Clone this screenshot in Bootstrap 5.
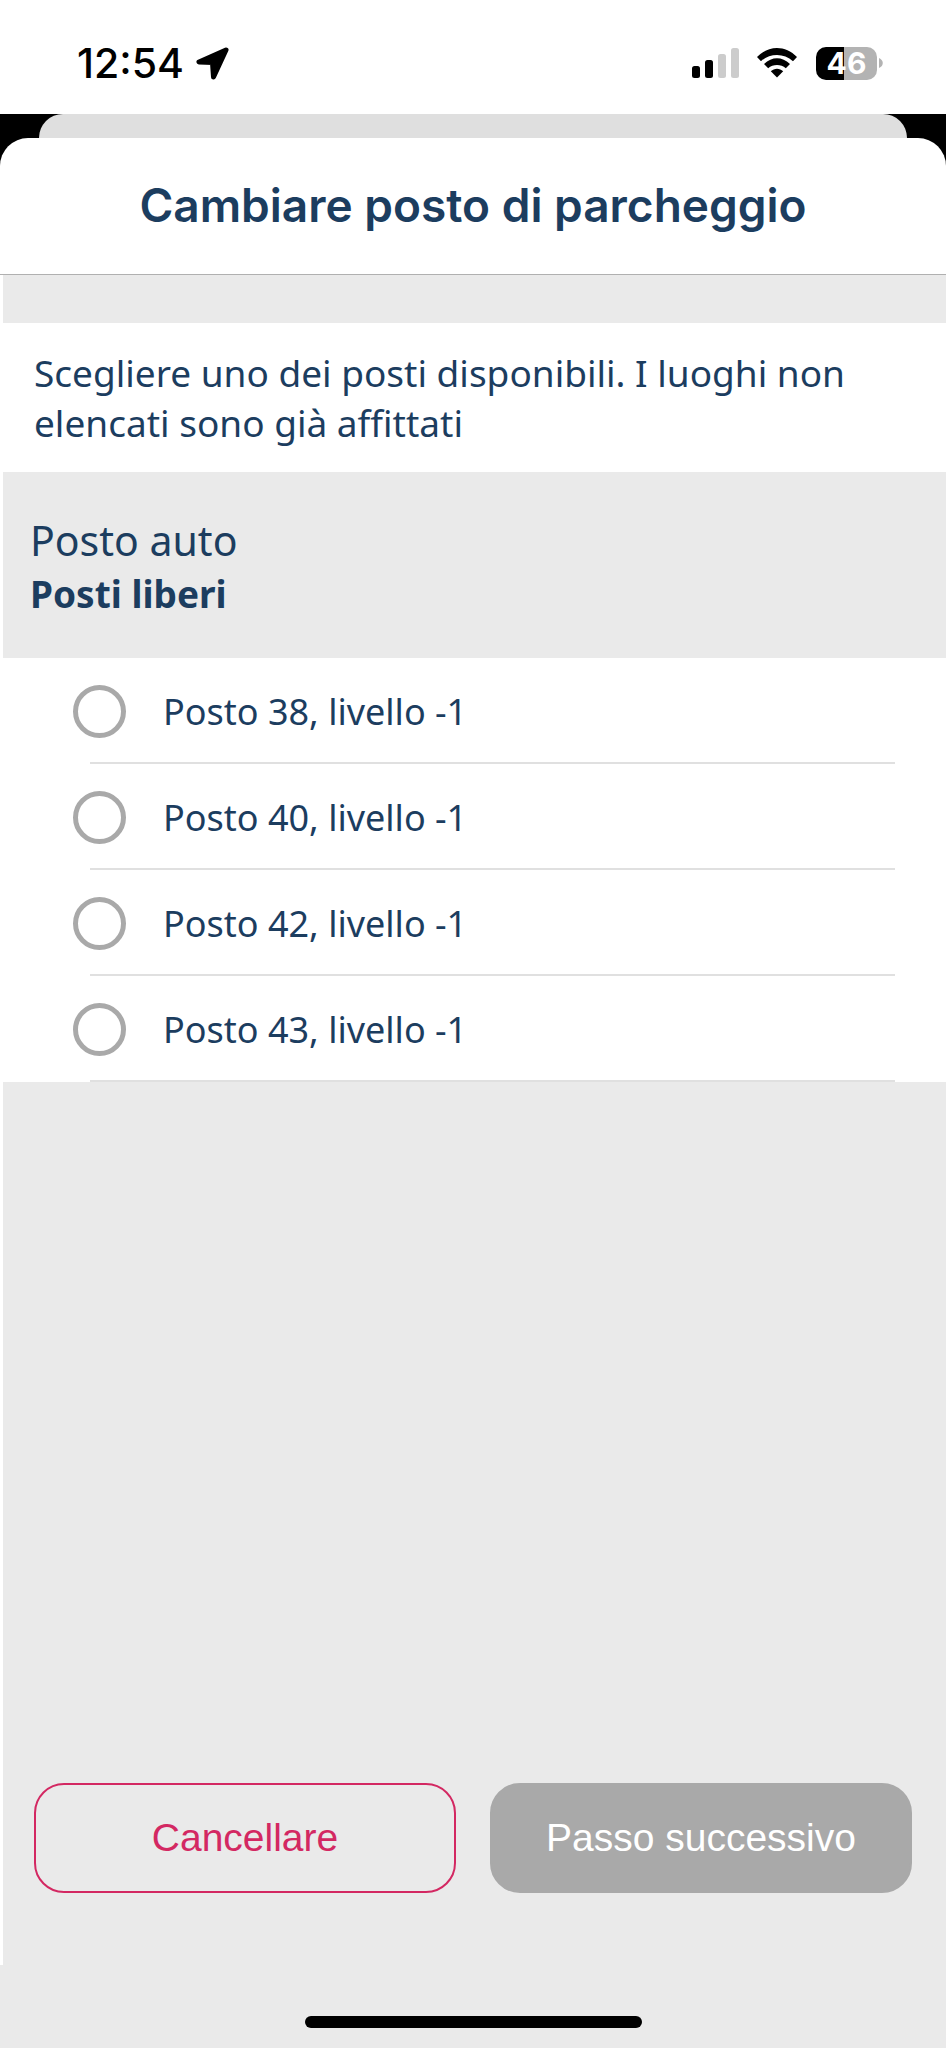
<!DOCTYPE html>
<html lang="it">
<head>
<meta charset="utf-8">
<meta name="viewport" content="width=device-width, initial-scale=1">
<title>Cambiare posto di parcheggio</title>
<link href="https://cdn.jsdelivr.net/npm/bootstrap@5.3.0/dist/css/bootstrap.min.css" rel="stylesheet">
<style>
  :root { --navy: #1c3d5f; --panel: #eaeaea; --accent: #d32862; --muted: #a9a9a9; }
  body { font-family: "Noto Sans", sans-serif; color: var(--navy); background: #000; }

  .status-bar { height: 114px; padding: 12px 63px 0 77px; color: #000; font-family: Inter, sans-serif; }
  .clock { font-size: 41px; line-height: 50px; font-weight: 500; }
  .battery-level {
    width: 61px; height: 33px; border-radius: 10px; color: #fff;
    font-size: 30px; line-height: 33px; font-weight: 700;
    background: linear-gradient(to right, #000 46%, #b3b3b3 46%);
  }

  .back-card { height: 24px; margin: 0 39px; background: #dfdfdf; border-radius: 26px 26px 0 0; }
  .sheet { border-radius: 28px 28px 0 0; background: #fff; }
  .sheet-header { height: 137px; padding-bottom: 2px; border-bottom: 1px solid #b0b0b0; }
  .sheet-title { font-family: Inter, sans-serif; font-size: 46px; line-height: 56px; font-weight: 600; }

  .sheet-body { background: var(--panel); border-left: 3px solid #fff; }
  .intro { margin-top: 48px; padding: 25px 31px 24px; font-size: 37px; line-height: 50px; }
  .group-head { padding: 40px 27px 38px; }
  .group-title { font-size: 41px; line-height: 56px; font-weight: 400; }
  .group-sub { font-size: 37px; line-height: 52px; font-weight: 700; }

  .spot { height: 104px; padding: 3px 51px 0 70px; gap: 37px; font-size: 36px; line-height: 50px; }
  .spot .form-check-input { width: 53px; height: 53px; margin: 0; border: 5px solid var(--muted); background-color: #fff; }
  .spot .form-check-input:checked { border-color: var(--accent); background-color: var(--accent); }
  .divider { height: 2px; margin: 0 51px 0 87px; background: #e0e0e0; }

  .actions { padding: 0 34px 72px 31px; gap: 34px; }
  .actions .btn {
    flex: 1 1 0; height: 110px; padding: 0; border-radius: 30px; border-width: 2px;
    font-family: "Liberation Sans", sans-serif; font-size: 39px; line-height: 50px;
  }
  .btn-cancel { --bs-btn-color: var(--accent); --bs-btn-border-color: var(--accent); --bs-btn-hover-color: #fff; --bs-btn-hover-bg: var(--accent); }
  .btn-next { --bs-btn-disabled-color: #fff; --bs-btn-disabled-bg: var(--muted); --bs-btn-disabled-border-color: var(--muted); --bs-btn-disabled-opacity: 1; }

  .home-area { height: 83px; padding-bottom: 20px; background: var(--panel); }
  .home-indicator { width: 337px; height: 12px; border-radius: 6px; background: #000; }
</style>
</head>
<body class="d-flex flex-column min-vh-100">

<header class="status-bar bg-white d-flex align-items-center justify-content-between">
  <div class="d-flex align-items-center">
    <span class="clock">12:54</span>
    <svg class="ms-2" width="40" height="34" viewBox="0 0 40 34" aria-hidden="true">
      <path d="M34 4 L7 16 L20.500 16.500 L21.500 31 Z" fill="#000" stroke="#000" stroke-width="5" stroke-linejoin="round"/>
    </svg>
  </div>
  <div class="d-flex align-items-center">
    <svg width="48" height="32" viewBox="0 0 48 32" aria-hidden="true">
      <rect x="0" y="19" width="8" height="12" rx="2.500"/>
      <rect x="13" y="13" width="8" height="18" rx="2.500"/>
      <rect x="26" y="7" width="8" height="24" rx="2.500" fill="#ccc"/>
      <rect x="39" y="1" width="8" height="30" rx="2.500" fill="#ccc"/>
    </svg>
    <svg class="mx-3" width="44" height="32" viewBox="0 0 44 32" aria-hidden="true">
      <path d="M1 10 C12.500 -2 29.500 -2 41 10 L37 14.200 C28 5.800 14 5.800 5 14.200 Z"/>
      <path d="M8 17 C16 9.300 26 9.300 34 17 L29.800 21.200 C25 17 17 17 12.200 21.200 Z"/>
      <path d="M14.800 24.300 C18.500 20.800 23.500 20.800 27.200 24.300 L21 30.500 Z"/>
    </svg>
    <div class="battery-level text-center">46</div>
    <svg width="6" height="12" viewBox="0 0 6 12" aria-hidden="true"><path d="M2 1 C7 3 7 9 2 11 Z" fill="#b3b3b3"/></svg>
  </div>
</header>

<div class="back-card"></div>

<main class="sheet flex-grow-1 d-flex flex-column">
  <div class="sheet-header d-flex align-items-center justify-content-center">
    <h1 class="sheet-title m-0">Cambiare posto di parcheggio</h1>
  </div>

  <form class="sheet-body flex-grow-1 d-flex flex-column">
    <p class="intro bg-white mb-0">Scegliere uno dei posti disponibili. I luoghi non elencati sono già affittati</p>

    <div class="group-head">
      <h2 class="group-title m-0">Posto auto</h2>
      <h3 class="group-sub m-0">Posti liberi</h3>
    </div>

    <ul class="list-unstyled bg-white mb-0">
      <li>
        <div class="spot d-flex align-items-center">
          <input class="form-check-input flex-shrink-0" type="radio" name="posto" id="posto38">
          <label for="posto38">Posto 38, livello -1</label>
        </div>
        <div class="divider"></div>
      </li>
      <li>
        <div class="spot d-flex align-items-center">
          <input class="form-check-input flex-shrink-0" type="radio" name="posto" id="posto40">
          <label for="posto40">Posto 40, livello -1</label>
        </div>
        <div class="divider"></div>
      </li>
      <li>
        <div class="spot d-flex align-items-center">
          <input class="form-check-input flex-shrink-0" type="radio" name="posto" id="posto42">
          <label for="posto42">Posto 42, livello -1</label>
        </div>
        <div class="divider"></div>
      </li>
      <li>
        <div class="spot d-flex align-items-center">
          <input class="form-check-input flex-shrink-0" type="radio" name="posto" id="posto43">
          <label for="posto43">Posto 43, livello -1</label>
        </div>
        <div class="divider"></div>
      </li>
    </ul>

    <div class="actions d-flex mt-auto">
      <button type="button" class="btn btn-cancel">Cancellare</button>
      <button type="submit" class="btn btn-next" disabled>Passo successivo</button>
    </div>
  </form>

  <div class="home-area d-flex align-items-end justify-content-center">
    <div class="home-indicator"></div>
  </div>
</main>

<script src="https://cdn.jsdelivr.net/npm/bootstrap@5.3.0/dist/js/bootstrap.bundle.min.js"></script>
</body>
</html>
